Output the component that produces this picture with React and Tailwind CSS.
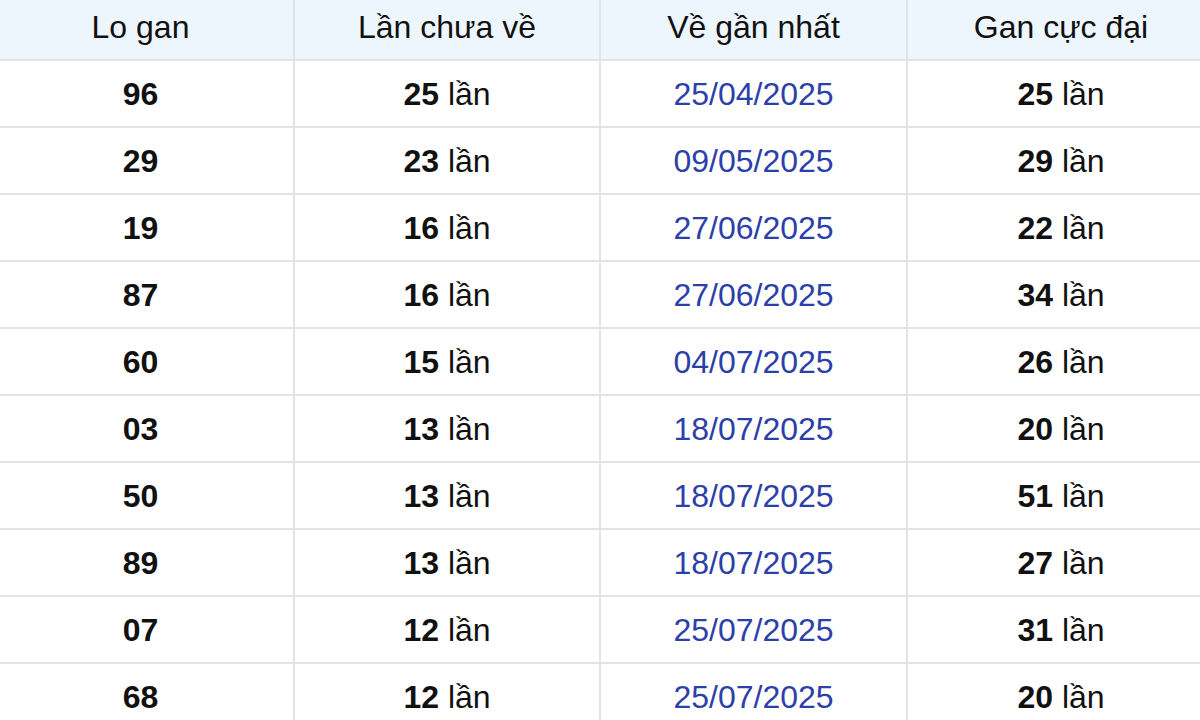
const ROWS = [
  ['96', '25', '25/04/2025', '25'],
  ['29', '23', '09/05/2025', '29'],
  ['19', '16', '27/06/2025', '22'],
  ['87', '16', '27/06/2025', '34'],
  ['60', '15', '04/07/2025', '26'],
  ['03', '13', '18/07/2025', '20'],
  ['50', '13', '18/07/2025', '51'],
  ['89', '13', '18/07/2025', '27'],
  ['07', '12', '25/07/2025', '31'],
  ['68', '12', '25/07/2025', '20'],
];

const HEADERS = ['Lo gan', 'Lần chưa về', 'Về gần nhất', 'Gan cực đại'];

export default function App() {
  return (
    <div className="w-[1200px] h-[720px] overflow-hidden bg-white font-['Liberation_Sans',Arial,sans-serif] text-[32px] text-[#111]">
      <table className="w-[1226px] ml-[-12px] border-collapse table-fixed">
        <colgroup>
          <col className="w-[306px]" />
          <col className="w-[306px]" />
          <col className="w-[307px]" />
          <col className="w-[307px]" />
        </colgroup>
        <thead>
          <tr className="bg-[#edf5fd]">
            {HEADERS.map((h, i) => (
              <th
                key={h}
                className={`h-[60px] p-0 pb-[6px] font-normal text-center border-b-2 border-[#e3e3e3] ${i < 3 ? 'border-r-2' : ''}`}
              >
                {h}
              </th>
            ))}
          </tr>
        </thead>
        <tbody>
          {ROWS.map((r) => (
            <tr key={r[0] + r[2]}>
              <td className="h-[67px] p-0 pt-[1px] text-center font-bold border-b-2 border-r-2 border-[#e3e3e3]">{r[0]}</td>
              <td className="h-[67px] p-0 pt-[1px] text-center border-b-2 border-r-2 border-[#e3e3e3]">
                <b>{r[1]}</b> lần
              </td>
              <td className="h-[67px] p-0 pt-[1px] text-center text-[#2b40a8] border-b-2 border-r-2 border-[#e3e3e3]">{r[2]}</td>
              <td className="h-[67px] p-0 pt-[1px] text-center border-b-2 border-[#e3e3e3]">
                <b>{r[3]}</b> lần
              </td>
            </tr>
          ))}
        </tbody>
      </table>
    </div>
  );
}
